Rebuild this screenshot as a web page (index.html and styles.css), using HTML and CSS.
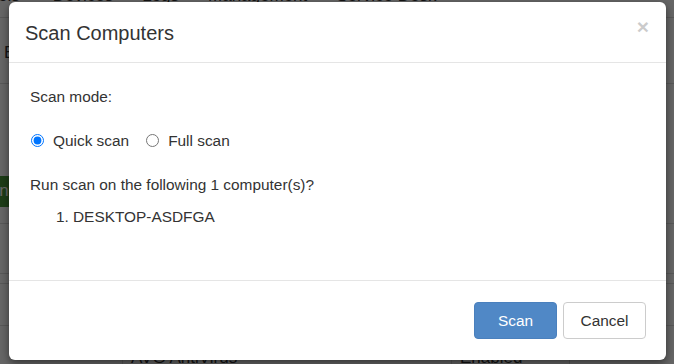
FILE: index.html
```html
<!DOCTYPE html>
<html lang="en">
<head>
    <meta charset="UTF-8">
    <meta name="viewport" content="width=device-width, initial-scale=1.0">
    <title>Scan Computers</title>
    <link rel="stylesheet" href="styles.css">
</head>
<body>
    <!-- Page behind the dialog -->
    <div class="page">
        <div class="nav">
            <span class="nav-item first">Tools</span>
            <span class="nav-item">Devices</span>
            <span class="nav-item">Logs</span>
            <span class="nav-item">Management</span>
            <span class="nav-item">Service Desk</span>
        </div>
        <div class="crumb">Endpoints</div>
        <div class="toolbar"><span class="btn-green">Scan</span></div>
        <div class="table">
            <div class="row head"><span class="cell c1"></span><span class="cell c2"></span><span class="cell c3"></span><span class="cell c4"></span></div>
            <div class="row thin"></div>
            <div class="row group"><span class="cell c1">Computer</span><span class="cell c2"></span><span class="cell c3"></span><span class="cell c4">Scan</span></div>
            <div class="row last"><span class="cell c1"></span><span class="cell c2">AVG AntiVirus</span><span class="cell c3">Enabled</span><span class="cell c4"></span></div>
        </div>
    </div>

    <div class="backdrop"></div>

    <!-- Dialog -->
    <div class="modal">
        <div class="modal-header">
            <h4 class="modal-title">Scan Computers</h4>
            <span class="close">&times;</span>
        </div>
        <div class="modal-body">
            <p class="label">Scan mode:</p>
            <div class="radios">
                <label class="radio"><input type="radio" name="mode" checked> Quick scan</label>
                <label class="radio"><input type="radio" name="mode"> Full scan</label>
            </div>
            <p class="question">Run scan on the following 1 computer(s)?</p>
            <ol class="computers">
                <li>DESKTOP-ASDFGA</li>
            </ol>
        </div>
        <div class="modal-footer">
            <button class="btn btn-primary">Scan</button>
            <button class="btn btn-default">Cancel</button>
        </div>
    </div>
</body>
</html>
```

FILE: styles.css
```css
html, body {
    margin: 0;
    height: 100%;
    overflow: hidden;
}
body {
    font-family: "Liberation Sans", Arial, sans-serif;
    font-size: 15.4px;
    color: #333;
    background-color: #fff;
    position: relative;
}

/* page behind the dialog */
.page {
    height: 100%;
}
.nav {
    display: flex;
    margin-top: -13px;
    height: 30px;
    line-height: 17px;
    font-size: 17px;
    border-bottom: 1px solid #ddd;
}
.nav-item {
    margin-right: 29px;
}
.nav-item.first {
    margin-left: -20px;
    margin-right: 33px;
}
.crumb {
    padding: 25px 4px 0;
    font-size: 17px;
    height: 40px;
    border-bottom: 1px solid #ddd;
}
.toolbar {
    padding-top: 92px;
    height: 47px;
}
.btn-green {
    display: inline-block;
    background-color: #4a9a3a;
    color: #fff;
    padding: 5px 12px 6px 0;
    font-size: 17px;
    margin-left: -30px;
}
.table {
    border-top: 1px solid #ddd;
}
.row {
    display: flex;
    height: 49px;
    border-bottom: 1px solid #ddd;
}
.row.thin {
    height: 9px;
}
.row.group {
    height: 41px;
}
.row.last .cell {
    padding-top: 22px;
}
.cell {
    padding: 10px 8px;
    font-size: 17px;
    border-right: 1px solid #ddd;
}
.row.group .cell {
    font-weight: bold;
}
.c1 { width: 106px; text-align: right; overflow: hidden; white-space: nowrap; direction: rtl; }
.c2 { width: 312px; }
.c3 { width: 101px; }
.c4 { flex: 1; border-right: none; }

.backdrop {
    position: absolute;
    inset: 0;
    background-color: rgba(0, 0, 0, 0.6);
}

/* dialog */
.modal {
    position: absolute;
    left: 9px;
    top: 2px;
    width: 657px;
    height: 358px;
    display: flex;
    flex-direction: column;
    background-color: #fff;
    border-radius: 6px;
    box-shadow: 0 3px 9px rgba(0, 0, 0, 0.5);
}
.modal-header {
    display: flex;
    justify-content: space-between;
    align-items: flex-start;
    padding: 17px 16px 15px 16px;
    border-bottom: 1px solid #e5e5e5;
}
.modal-title {
    margin: 0;
    font-size: 20px;
    font-weight: normal;
    line-height: 28px;
}
.close {
    font-size: 21px;
    font-weight: bold;
    line-height: 1;
    color: #000;
    opacity: 0.2;
    margin-top: -3px;
    margin-right: 1px;
}
.modal-body {
    flex: 1;
    padding: 23px 21px 20px;
}
.modal-body p {
    margin: 0;
    line-height: 21px;
}
.radios {
    display: flex;
    gap: 16px;
    margin: 23px 0;
    line-height: 21px;
}
.radio {
    display: flex;
    align-items: center;
}
.radio input {
    margin: 0 9px 0 1px;
    width: 13px;
    height: 13px;
    accent-color: #0075ff;
}
.computers {
    margin: 11px 0 0;
    padding-left: 43px;
    line-height: 21px;
}
.modal-footer {
    display: flex;
    justify-content: flex-end;
    gap: 6px;
    padding: 21px 20px 21px;
    border-top: 1px solid #e5e5e5;
}
.btn {
    width: 83px;
    height: 37px;
    font-family: "Liberation Sans", Arial, sans-serif;
    font-size: 15.4px;
    border-radius: 4px;
    cursor: pointer;
}
.btn-primary {
    background-color: #5088c6;
    border: 1px solid #4a80bd;
    color: #fff;
}
.btn-default {
    background-color: #fff;
    border: 1px solid #ccc;
    color: #333;
}
```
